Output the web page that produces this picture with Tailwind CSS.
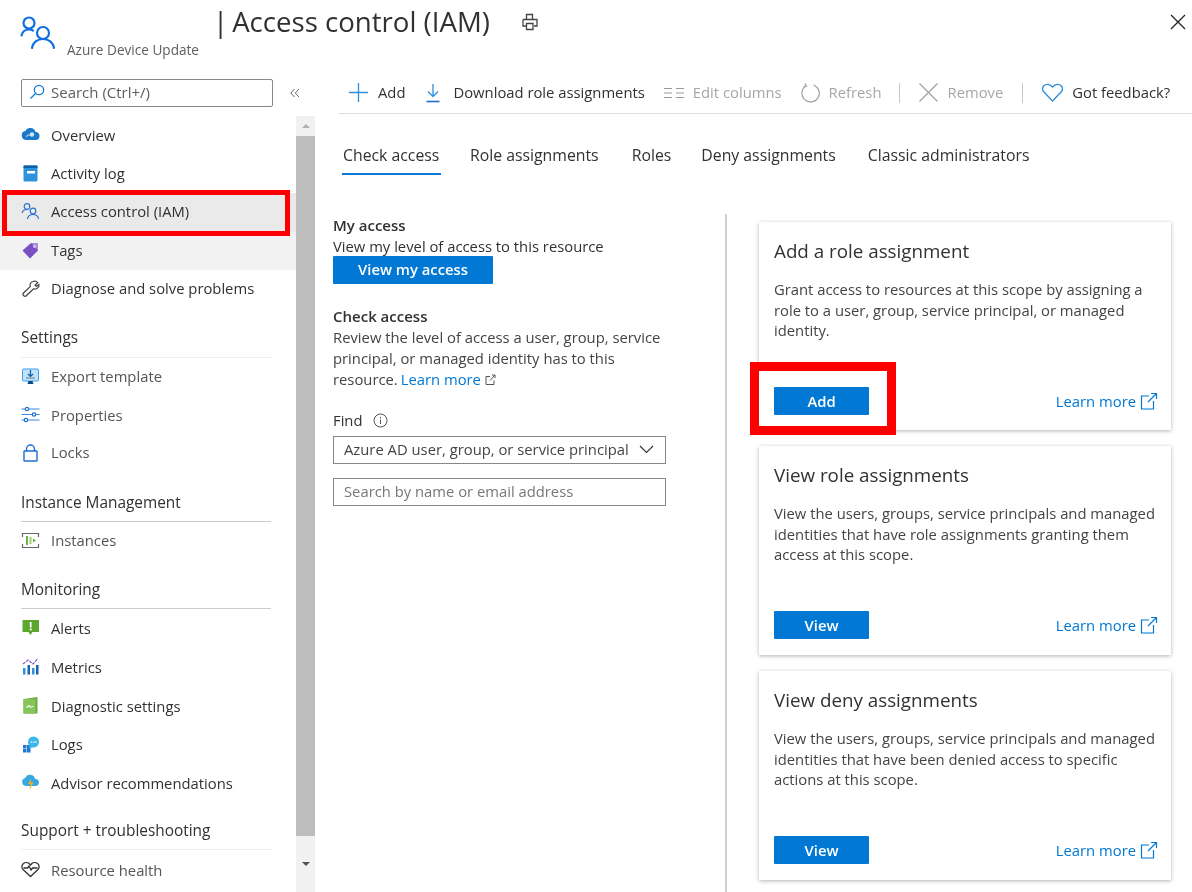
<!DOCTYPE html>
<html>
<head>
<meta charset="utf-8">
<script src="https://cdn.jsdelivr.net/npm/@tailwindcss/browser@4"></script>
</head>
<body class="bg-white">
<div class="relative w-[1192px] h-[892px] overflow-hidden bg-white font-['Open_Sans',sans-serif] text-[#323130] text-[14.8px] blur-[0.4px]">

  <!-- header -->
  <header class="flex h-[78px]">
    <div class="w-[67px] pl-[20px] pt-[14px] shrink-0">
      <svg class="w-[36px] h-[36px]" viewBox="0 0 36 36" fill="none" stroke="#0f6fe0" stroke-width="2.200" stroke-linecap="round">
        <circle cx="9" cy="9" r="5.500"/><path d="M1.500 21.500c.8-3.500 3.800-6 7.500-6 1.500 0 2.800.3 4 1"/>
        <circle cx="23" cy="19" r="6"/><path d="M12 34c.8-5.500 5.500-9 11-9s10.200 3.500 11 9"/>
      </svg>
    </div>
    <div class="w-[146px] shrink-0 pt-[41px] text-[13.600px] leading-[18px] text-[#605e5c] whitespace-nowrap">Azure Device Update</div>
    <h1 class="pt-[2px] text-[27.600px] leading-[38px] whitespace-nowrap text-[#323130] flex"><span>|</span><span class="ml-[4px]">Access control (IAM)</span></h1>
    <svg class="ml-[30px] mt-[12px] w-[20px] h-[20px]" viewBox="0 0 20 20" fill="none" stroke="#444" stroke-width="1.300">
      <path d="M6.500 7V2.500h6V7M3 7.500h14v6.500h-3M6 14H3V7.500M6.500 11.500h6.500v6H6.500z"/>
    </svg>
    <svg class="ml-auto mr-[6px] mt-[14px] w-[16px] h-[16px]" viewBox="0 0 16 16" fill="none" stroke="#222" stroke-width="1.300"><path d="M1 1l14 14M15 1L1 15"/></svg>
  </header>

  <div class="flex h-[814px]">
    <!-- sidebar -->
    <aside class="w-[315px] shrink-0 flex flex-col">
      <div class="h-[38px] flex items-start pl-[21px] shrink-0">
        <div class="mt-[1px] w-[252px] h-[28px] rounded-[2px] border border-[#8a8886] flex items-center pl-[7px] pb-[2px] gap-[6px] text-[#605e5c] text-[15px]">
          <svg class="w-[16px] h-[16px]" viewBox="0 0 16 16" fill="none" stroke="#0f78d4" stroke-width="1.200"><circle cx="10" cy="6" r="4.700"/><path d="M6.500 9.500L1.500 14.500"/></svg>
          <span>Search (Ctrl+/)</span>
        </div>
        <svg class="ml-[17px] mt-[10px] w-[10px] h-[10px]" viewBox="0 0 10 10" fill="none" stroke="#666" stroke-width="1"><path d="M4.500 1L.8 5l3.700 4M9 1L5.300 5 9 9"/></svg>
      </div>
      <div class="flex flex-1 min-h-0">
        <nav class="w-[296px] shrink-0">
          <a class="flex items-center h-[38.500px] pl-[21px] pb-[1px] gap-[11px]">
            <svg class="w-[19px] h-[19px] shrink-0" viewBox="0 0 19 19"><path d="M5 15a4.500 4.500 0 0 1-.7-8.900A5.500 5.500 0 0 1 14.500 7 4 4 0 0 1 14.500 15z" fill="#1c78c9"/><circle cx="11" cy="9.500" r="2.200" fill="#cfe6f7"/><path d="M5.500 12a2 2 0 0 1 2-2h3" stroke="#cfe6f7" fill="none"/></svg>
            <span>Overview</span>
          </a>
          <a class="flex items-center h-[38.500px] pl-[21px] pb-[1px] gap-[11px]">
            <svg class="w-[19px] h-[19px] shrink-0" viewBox="0 0 19 19"><rect x="2.500" y="1.500" width="14" height="16" rx="1.500" fill="#2f92dc"/><rect x="2.500" y="1.500" width="14" height="2.500" fill="#0f5ea8"/><rect x="6" y="7" width="8" height="2.500" fill="#fff"/></svg>
            <span>Activity log</span>
          </a>
          <a class="flex items-center h-[38.500px] pl-[21px] pb-[2px] gap-[11px] bg-[#ebeaea]">
            <svg class="w-[19px] h-[19px] shrink-0" viewBox="0 0 19 19" fill="none" stroke="#2b6fd0" stroke-width="1.200"><circle cx="6" cy="4.500" r="2.800"/><path d="M1 11c.5-2.500 2.500-3.500 5-3.500"/><circle cx="12" cy="9" r="2.800"/><path d="M6.500 17c.4-3 2.500-4.500 5.500-4.500s5.100 1.500 5.500 4.500"/></svg>
            <span>Access control (IAM)</span>
          </a>
          <a class="flex items-center h-[38.500px] pl-[21px] pb-[1px] gap-[11px] bg-[#f2f2f2]">
            <svg class="w-[19px] h-[19px] shrink-0" viewBox="0 0 19 19"><path d="M1.500 9.500L10 2h7v7.500L9 17.500z" fill="#7b4fc4"/><path d="M10 2h7v7.500z" fill="#a98ade"/><circle cx="13.500" cy="5.500" r="1.300" fill="#e8e0f7"/></svg>
            <span>Tags</span>
          </a>
          <a class="flex items-center h-[38.500px] pl-[21px] pb-[2px] gap-[11px]">
            <svg class="w-[19px] h-[19px] shrink-0" viewBox="0 0 19 19" fill="none" stroke="#444" stroke-width="1.200"><path d="M12 2.500a4 4 0 0 1 4.800 1.300l-2.800 2.200 1.300 1.500 2.700-2a4 4 0 0 1-5.300 4.300L5.500 16.500a1.800 1.800 0 0 1-3-2.500l6.700-6.300A4 4 0 0 1 12 2.500z"/></svg>
            <span>Diagnose and solve problems</span>
          </a>

          <div class="h-[49px] mx-[21px] mr-[25px] border-b border-[#eeeeee] flex items-end pb-[7px] font-medium text-[15.400px]"><span>Settings</span></div>
          <a class="flex items-center h-[38.500px] pl-[21px] pb-[1px] gap-[11px]">
            <svg class="w-[19px] h-[19px] shrink-0" viewBox="0 0 19 19"><rect x="1.500" y="2" width="16" height="12" rx="1" fill="#bfe3fa" stroke="#3aa0e8"/><path d="M9.500 3v6M7 7l2.500 2.500L12 7" stroke="#0f5ea8" fill="none" stroke-width="1.200"/><rect x="5" y="10.500" width="9" height="1" fill="#777"/><path d="M7.500 14h4l1 3h-6z" fill="#0f4a85"/></svg>
            <span class="text-[#555]">Export template</span>
          </a>
          <a class="flex items-center h-[38.500px] pl-[21px] pb-[1px] gap-[11px]">
            <svg class="w-[19px] h-[19px] shrink-0" viewBox="0 0 19 19" fill="none" stroke="#1f6fd6" stroke-width="1.200"><path d="M.5 4h18M.5 9.500h18M.5 15h18" stroke="#3b87e0"/><circle cx="6" cy="4" r="1.700" fill="#fff"/><circle cx="13" cy="9.500" r="1.700" fill="#fff"/><circle cx="5" cy="15" r="1.700" fill="#fff"/></svg>
            <span class="text-[#555]">Properties</span>
          </a>
          <a class="flex items-center h-[38.500px] pl-[21px] pb-[3px] gap-[11px]">
            <svg class="w-[19px] h-[19px] shrink-0" viewBox="0 0 19 19" fill="none" stroke="#1f6fd6" stroke-width="1.400"><rect x="3" y="8" width="13" height="10" rx=".5"/><path d="M5.500 8V6a4 4 0 0 1 8 0v2"/></svg>
            <span class="text-[#555]">Locks</span>
          </a>

          <div class="h-[48.500px] mx-[21px] mr-[25px] border-b border-[#cccccc] flex items-end pb-[6px] font-medium text-[15.400px]"><span>Instance Management</span></div>
          <a class="flex items-center h-[38.500px] pl-[21px] pb-[1px] gap-[11px]">
            <svg class="w-[19px] h-[19px] shrink-0" viewBox="0 0 19 19" fill="none"><path d="M1.500 6V2.500h16V6M1.500 13v3.500h16V13" stroke="#666" stroke-width="1.200"/><rect x="5" y="5" width="2" height="9" fill="#6cb33f"/><rect x="8.500" y="6" width="2" height="7" fill="#9bd16f"/><path d="M12 7.500l3 2-3 2z" fill="#6cb33f"/></svg>
            <span class="text-[#555]">Instances</span>
          </a>

          <div class="h-[48.500px] mx-[21px] mr-[25px] border-b border-[#cccccc] flex items-end pb-[6px] font-medium text-[15.400px]"><span>Monitoring</span></div>
          <a class="flex items-center h-[38.500px] pl-[21px] pt-[1px] gap-[11px]">
            <svg class="w-[19px] h-[19px] shrink-0" viewBox="0 0 19 19"><path d="M1.500 1h16.500v12H11.500l-2 3-2-3H1.500z" fill="#5ea72e"/><rect x="8.800" y="3" width="1.800" height="5.500" fill="#fff"/><rect x="8.800" y="9.500" width="1.800" height="1.800" fill="#fff"/></svg>
            <span>Alerts</span>
          </a>
          <a class="flex items-center h-[38.500px] pl-[21px] pt-[1px] gap-[11px]">
            <svg class="w-[19px] h-[19px] shrink-0" viewBox="0 0 19 19"><rect x="2" y="11" width="2.500" height="6.500" fill="#2f92dc"/><rect x="6.500" y="8" width="2.500" height="9.500" fill="#1565b0"/><rect x="11" y="11" width="2.500" height="6.500" fill="#2f92dc"/><rect x="15" y="8" width="2.500" height="9.500" fill="#1565b0"/><path d="M2 7l5-4 5 4 5-5.500" stroke="#7b4fc4" stroke-width="1.200" fill="none" stroke-dasharray="3 1"/></svg>
            <span>Metrics</span>
          </a>
          <a class="flex items-center h-[38.500px] pl-[21px] pt-[2px] gap-[11px]">
            <svg class="w-[19px] h-[19px] shrink-0" viewBox="0 0 19 19"><path d="M2.500 3L16.500 1v16.500H2.500z" fill="#6cae3e"/><rect x="2.500" y="3" width="12" height="14.500" fill="#86c35a"/><path d="M5 11h2l1-2 1.500 3 1-1.500h2" stroke="#fff" fill="none"/></svg>
            <span>Diagnostic settings</span>
          </a>
          <a class="flex items-center h-[38.500px] pl-[21px] pt-[2px] gap-[11px]">
            <svg class="w-[19px] h-[19px] shrink-0" viewBox="0 0 19 19"><path d="M2 10h3.500v3.500H2zM2 14h3.500v3.500H2zM6 10h3.500v7.500H6z" fill="#1f78d1"/><circle cx="12.500" cy="7" r="5.500" fill="#3bb8ea"/><path d="M9 10.500l-1.500 2.500L12 12.500z" fill="#3bb8ea"/><circle cx="10.500" cy="7" r=".8" fill="#fff"/><circle cx="13" cy="7" r=".8" fill="#fff"/><circle cx="15" cy="7" r=".8" fill="#fff"/></svg>
            <span>Logs</span>
          </a>
          <a class="flex items-center h-[38.500px] pl-[21px] pt-[2px] gap-[11px]">
            <svg class="w-[19px] h-[19px] shrink-0" viewBox="0 0 19 19"><path d="M5 13a4 4 0 0 1-.7-7.900A5 5 0 0 1 14 6a3.500 3.500 0 0 1 .8 7z" fill="#38a9e0"/><path d="M10 6l-3 5h2.500l-1 6 4-7.500H10z" fill="#f2b21c"/></svg>
            <span>Advisor recommendations</span>
          </a>

          <div class="h-[48.500px] mx-[21px] mr-[25px] border-b border-[#eeeeee] flex items-end pb-[6px] font-medium text-[15.400px]"><span>Support + troubleshooting</span></div>
          <a class="flex items-center h-[38.500px] pl-[21px] pt-[2px] gap-[11px]">
            <svg class="w-[19px] h-[19px] shrink-0" viewBox="0 0 19 19" fill="none" stroke="#333" stroke-width="1.300"><path d="M9.500 16.500L2 9.500a4 4 0 0 1 .5-6c2-1.500 5-1 7 1.500 2-2.500 5-3 7-1.500a4 4 0 0 1 .5 6z"/><path d="M2.500 8h4l1.500-2 2 4 1.500-2h5"/></svg>
            <span class="text-[#555]">Resource health</span>
          </a>
        </nav>
        <div class="w-[19px] bg-[#f1f1f1] flex flex-col shrink-0 h-[776px]">
          <div class="h-[20px] flex items-center justify-center"><span class="w-0 h-0 border-x-[4px] border-x-transparent border-b-[4px] border-b-[#b0b0b0]"></span></div>
          <div class="h-[700px] bg-[#bdbdbd]"></div>
          <div class="flex-1 flex items-center justify-center"><span class="w-0 h-0 border-x-[4px] border-x-transparent border-t-[4px] border-t-[#505050]"></span></div>
        </div>
      </div>
    </aside>

    <!-- main -->
    <main class="flex-1 min-w-0">
      <div class="ml-[24px] h-[36px] border-b border-[#dddddd] flex items-start whitespace-nowrap">
        <div class="flex items-center h-[29px] pl-[10px] w-full">
          <svg class="w-[19px] h-[19px]" viewBox="0 0 19 19" stroke="#2e8fdc" stroke-width="1.300"><path d="M9.500 0v19M0 9.500h19"/></svg>
          <span class="ml-[10px]">Add</span>
          <svg class="ml-[20px] w-[16px] h-[20px]" viewBox="0 0 16 20" fill="none" stroke="#2e8fdc" stroke-width="1.300"><path d="M8 1v12M3 8.500L8 13.500l5-5"/><path d="M1.500 18.500h13" stroke="#1b6ec2" stroke-width="1.600"/></svg>
          <span class="ml-[12px]">Download role assignments</span>
          <svg class="ml-[19px] w-[20px] h-[12px]" viewBox="0 0 20 12" stroke="#9a9a9a" stroke-width="1"><path d="M0 1.500h8M0 6h8M0 10.500h8M12 1.500h8M12 6h8M12 10.500h8"/></svg>
          <span class="ml-[9px] text-[#a6a6a6]">Edit columns</span>
          <svg class="ml-[18px] w-[20px] h-[20px]" viewBox="0 0 20 20" fill="none" stroke="#a0a0a0" stroke-width="1.200"><path d="M6 2.800A8.700 8.700 0 1 0 13.500 2"/><path d="M5 .5L6.500 3.200 3.500 4"/></svg>
          <span class="ml-[9px] text-[#a6a6a6]">Refresh</span>
          <span class="ml-[17px] w-px h-[20px] bg-[#c8c8c8]"></span>
          <svg class="ml-[19px] w-[19px] h-[19px]" viewBox="0 0 19 19" stroke="#a0a0a0" stroke-width="1.200"><path d="M.5.500l18 18M18.500.500l-18 18"/></svg>
          <span class="ml-[10px] text-[#a6a6a6]">Remove</span>
          <span class="ml-[19px] w-px h-[20px] bg-[#c8c8c8]"></span>
          <svg class="ml-[19px] w-[21px] h-[19px]" viewBox="0 0 21 19" fill="none" stroke="#2e8fdc" stroke-width="1.300"><path d="M10.500 18L1.500 8.500A4.500 4.500 0 0 1 1.700 3C3.800.8 7.500.8 10.500 4c3-3.200 6.700-3.200 8.800-1a4.500 4.500 0 0 1 .2 5.500z"/></svg>
          <span class="ml-[9px]">Got feedback?</span>
        </div>
      </div>

      <div class="ml-[27px] mt-[25px] flex h-[36px] text-[15.800px] leading-[32px] whitespace-nowrap">
        <span class="border-b-2 border-[#0f78d4] w-[99px] pl-[1px] h-[36px]">Check access</span>
        <span class="ml-[29px]">Role assignments</span>
        <span class="ml-[33px]">Roles</span>
        <span class="ml-[30px]">Deny assignments</span>
        <span class="ml-[32px]">Classic administrators</span>
      </div>

      <div class="flex mt-[40px]">
        <section class="w-[410px] pl-[18px] shrink-0 leading-[20.800px]">
          <h2 class="font-semibold text-[15px]">My access</h2>
          <p class="whitespace-nowrap">View my level of access to this resource</p>
          <div class="mt-[-1px] w-[160px] h-[28px] bg-[#0078d4] text-white font-semibold flex items-center justify-center rounded-[1px]">View my access</div>
          <h2 class="font-semibold text-[15px] mt-[22px]">Check access</h2>
          <p class="mt-[1px] w-[345px] text-[#444]">Review the level of access a user, group, service principal, or managed identity has to this</p>
          <div class="flex items-center text-[#444]">
            <span>resource.</span>
            <a class="ml-[3px] text-[#0078d4]">Learn more</a>
            <svg class="ml-[4px] w-[11px] h-[11px]" viewBox="0 0 11 11" fill="none" stroke="#555"><path d="M5 2.500H1v8h8V6.500M5 6.500L10 1M7 1h3v3"/></svg>
          </div>
          <div class="mt-[21px] flex items-center h-[20px]">Find <svg class="ml-[10px] w-[15px] h-[15px]" viewBox="0 0 15 15" fill="none" stroke="#555"><circle cx="7.500" cy="7.500" r="6.500"/><path d="M7.500 6.500v4.500M7.500 4v1.500"/></svg></div>
          <div class="mt-[5px] w-[333px] h-[28px] border border-[#8a8886] flex items-center pl-[10px] pr-[11px] justify-between whitespace-nowrap text-[#444]">
            <span>Azure AD user, group, or service principal</span>
            <svg class="w-[15px] h-[9px]" viewBox="0 0 15 9" fill="none" stroke="#333" stroke-width="1.200"><path d="M1 1l6.500 6.500L14 1"/></svg>
          </div>
          <div class="mt-[14px] w-[333px] h-[28px] border border-[#8a8886] flex items-center pl-[10px] text-[#777]">Search by name or email address</div>
        </section>
        <div class="w-[2px] bg-[#cfcfcf] h-[680px] mt-[-1px]"></div>
        <section class="ml-[32px] w-[412px] shrink-0 flex flex-col gap-[16px] pt-[7px] leading-[20.700px]">
          <article class="h-[208px] bg-white shadow-[0_1px_4px_rgba(0,0,0,0.3)] pl-[15px] pr-[13px] pt-[15px] flex flex-col">
            <h3 class="text-[18.800px] leading-[28px] font-medium">Add a role assignment</h3>
            <p class="mt-[14px] pr-[2px] text-[#444]">Grant access to resources at this scope by assigning a role to a user, group, service principal, or managed identity.</p>
            <div class="mt-auto mb-[15px] flex items-center justify-between">
              <div class="w-[95px] h-[28px] bg-[#0078d4] text-white font-semibold flex items-center justify-center rounded-[1px]">Add</div>
              <a class="flex items-center gap-[4px] text-[#0078d4]">Learn more <svg class="w-[18px] h-[18px]" viewBox="0 0 18 18" fill="none" stroke="#0078d4" stroke-width="1.200"><path d="M9 4H1.500v13h12V9M8 10L16.500 1.500M11 1.500h5.500V7"/></svg></a>
            </div>
          </article>
          <article class="h-[209px] bg-white shadow-[0_1px_4px_rgba(0,0,0,0.3)] pl-[15px] pr-[13px] pt-[15px] flex flex-col">
            <h3 class="text-[18.800px] leading-[28px] font-medium">View role assignments</h3>
            <p class="mt-[14px] pr-[2px] text-[#444]">View the users, groups, service principals and managed identities that have role assignments granting them access at this scope.</p>
            <div class="mt-auto mb-[16px] flex items-center justify-between">
              <div class="w-[95px] h-[28px] bg-[#0078d4] text-white font-semibold flex items-center justify-center rounded-[1px]">View</div>
              <a class="flex items-center gap-[4px] text-[#0078d4]">Learn more <svg class="w-[18px] h-[18px]" viewBox="0 0 18 18" fill="none" stroke="#0078d4" stroke-width="1.200"><path d="M9 4H1.500v13h12V9M8 10L16.500 1.500M11 1.500h5.500V7"/></svg></a>
            </div>
          </article>
          <article class="h-[209px] bg-white shadow-[0_1px_4px_rgba(0,0,0,0.3)] pl-[15px] pr-[13px] pt-[15px] flex flex-col">
            <h3 class="text-[18.800px] leading-[28px] font-medium">View deny assignments</h3>
            <p class="mt-[14px] pr-[2px] text-[#444]">View the users, groups, service principals and managed identities that have been denied access to specific actions at this scope.</p>
            <div class="mt-auto mb-[16px] flex items-center justify-between">
              <div class="w-[95px] h-[28px] bg-[#0078d4] text-white font-semibold flex items-center justify-center rounded-[1px]">View</div>
              <a class="flex items-center gap-[4px] text-[#0078d4]">Learn more <svg class="w-[18px] h-[18px]" viewBox="0 0 18 18" fill="none" stroke="#0078d4" stroke-width="1.200"><path d="M9 4H1.500v13h12V9M8 10L16.500 1.500M11 1.500h5.500V7"/></svg></a>
            </div>
          </article>
        </section>
      </div>
    </main>
  </div>

  <!-- red annotation boxes -->
  <div class="absolute left-[2px] top-[190px] w-[288px] h-[46px] border-[5px] border-[#ff0000]"></div>
  <div class="absolute left-[750px] top-[362px] w-[146px] h-[73px] border-[9px] border-[#ff0000]"></div>
</div>
</body>
</html>
